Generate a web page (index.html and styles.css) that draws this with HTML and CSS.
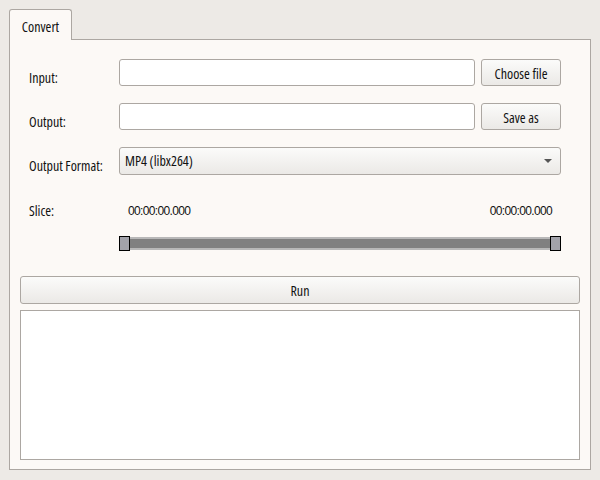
FILE: index.html
```html
<!DOCTYPE html>
<html>
<head>
<meta charset="utf-8">
<link rel="stylesheet" href="styles.css">
</head>
<body>
<div class="window">
  <div class="tabbar">
    <div class="tab">Convert</div>
  </div>
  <div class="pane">
    <div class="form">
      <div class="row">
        <div class="label">Input:</div>
        <div class="field"></div>
        <div class="button">Choose file</div>
      </div>
      <div class="row">
        <div class="label">Output:</div>
        <div class="field"></div>
        <div class="button">Save as</div>
      </div>
      <div class="row combo-row">
        <div class="label">Output Format:</div>
        <div class="combo">
          <span>MP4 (libx264)</span>
          <span class="arrow"></span>
        </div>
      </div>
      <div class="slice">
        <div class="slice-top">
          <div class="label">Slice:</div>
          <div class="times">
            <span class="time">00:00:00.000</span>
            <span class="time">00:00:00.000</span>
          </div>
        </div>
        <div class="slider-row">
          <div class="slider">
            <div class="handle"></div>
            <div class="groove"><div class="groove-fill"></div></div>
            <div class="handle"></div>
          </div>
        </div>
      </div>
    </div>
    <div class="run">Run</div>
    <div class="log"></div>
  </div>
</div>
</body>
</html>
```

FILE: styles.css
```css
* { box-sizing: border-box; }
html, body { margin: 0; padding: 0; }
body {
  width: 600px;
  height: 480px;
  background: #edeae6;
  font-family: "Open Sans", "Liberation Sans", sans-serif;
  font-stretch: 75%;
  font-size: 14px;
  color: #111111;
}
.window {
  padding: 9px 9px 10px 9px;
}
.tabbar {
  display: flex;
  margin-bottom: -1px;
}
.tab {
  position: relative;
  z-index: 1;
  width: 63px;
  height: 31px;
  border: 1px solid #aca7a2;
  border-bottom: none;
  border-radius: 3px 3px 0 0;
  background: #fcf9f6;
  display: flex;
  align-items: center;
  justify-content: center;
  padding-top: 2px;
}
.pane {
  height: 431px;
  border: 1px solid #aca7a2;
  background: #fcf9f6;
  padding: 19px 10px 0 10px;
  display: flex;
  flex-direction: column;
}
.form {
  display: flex;
  flex-direction: column;
  gap: 17px;
  padding: 0 19px 0 9px;
}
.row {
  display: flex;
  align-items: center;
  height: 27px;
}
.combo-row { height: 28px; }
.label {
  width: 90px;
  flex: none;
  padding-top: 9px;
}
.field {
  flex: 1;
  height: 27px;
  background: #ffffff;
  border: 1px solid #aca7a2;
  border-radius: 3px;
}
.button {
  flex: none;
  width: 80px;
  height: 27px;
  margin-left: 6px;
  border: 1px solid #aca7a2;
  border-radius: 3px;
  background: linear-gradient(#fbfbfa, #ebe9e6);
  display: flex;
  align-items: center;
  justify-content: center;
  padding-top: 1px;
}
.combo {
  flex: 1;
  height: 28px;
  border: 1px solid #aca7a2;
  border-radius: 3px;
  background: linear-gradient(#fbfbfa, #ebe9e6);
  display: flex;
  align-items: center;
  justify-content: space-between;
  padding: 0 8px 2px 5px;
}
.arrow {
  width: 0;
  height: 0;
  margin-top: 2px;
  border-left: 4px solid transparent;
  border-right: 4px solid transparent;
  border-top: 4px solid #555;
}
.slice {
  display: flex;
  flex-direction: column;
  padding-top: 9px;
}
.slice-top {
  display: flex;
  align-items: center;
  height: 19px;
}
.slice-top .label { padding-top: 0; }
.times {
  flex: 1;
  display: flex;
  justify-content: space-between;
  padding: 0 9px 0 9px;
}
.time {
  font-family: "Liberation Sans", sans-serif;
  font-stretch: normal;
  font-size: 12px;
  letter-spacing: -0.65px;
}
.slider-row {
  padding-left: 90px;
  margin-top: 16px;
}
.slider {
  display: flex;
  align-items: center;
  height: 15px;
}
.handle {
  flex: none;
  width: 11px;
  height: 15px;
  background: #a2a2aa;
  border: 1px solid #000;
}
.groove {
  flex: 1;
  height: 13px;
  background: #b8b8b8;
  padding: 2px 0;
}
.groove-fill {
  height: 9px;
  background: #808080;
}
.run {
  margin-top: 25px;
  height: 28px;
  border: 1px solid #aca7a2;
  border-radius: 3px;
  background: linear-gradient(#fbfbfa, #ebe9e6);
  display: flex;
  align-items: center;
  justify-content: center;
}
.log {
  margin-top: 6px;
  height: 150px;
  background: #ffffff;
  border: 1px solid #aca7a2;
}
```
